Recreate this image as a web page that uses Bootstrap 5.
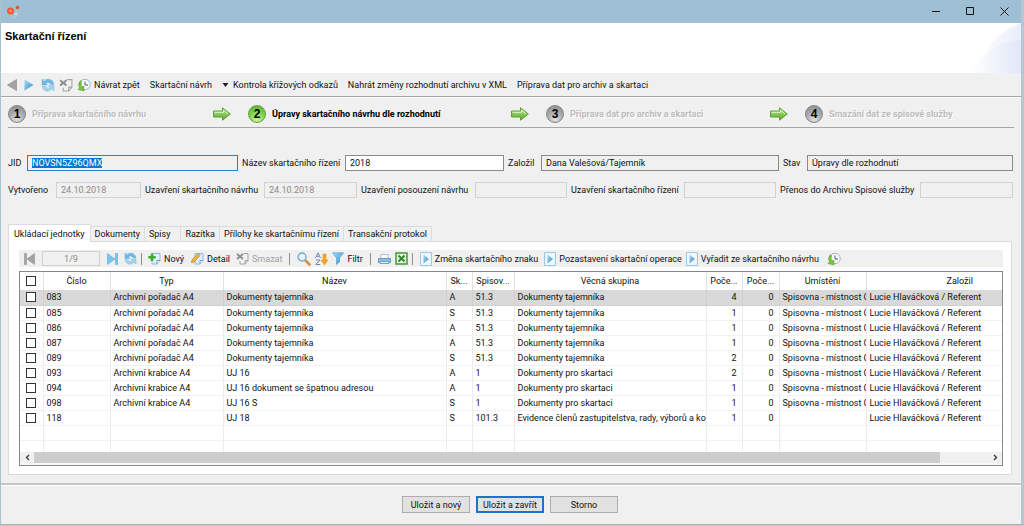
<!DOCTYPE html>
<html lang="cs">
<head>
<meta charset="utf-8">
<meta name="viewport" content="width=device-width, initial-scale=1">
<title>Skartační řízení</title>
<link href="https://cdn.jsdelivr.net/npm/bootstrap@5.3.0/dist/css/bootstrap.min.css" rel="stylesheet">
<style>
body{font-family:Roboto,"Liberation Sans",sans-serif;font-size:9px;line-height:14px;color:#111;background:#c9cdd0;}
button,input{font:inherit;color:inherit}
svg{display:block;flex:none}
.win{min-height:calc(100vh - 1px);background:#f0f0f0;border-left:1px solid #a9c3cd;border-right:3px solid #b4c8d3;border-bottom:1px solid #a8adb0}
.titlebar{height:23px;background:#9fc0d4;padding-left:5px}
.wbtn{width:34px;height:23px;border:0;background:none;padding:0;display:flex;align-items:center;justify-content:center}
.head{height:50px;background:#fff;position:relative;overflow:hidden}
.head h1{font:bold 11px/14px "Liberation Sans",sans-serif;color:#000;padding:6px 0 0 4px;margin:0}
.deco{position:absolute;right:0;top:0}
.tools{height:24px;border-bottom:1px solid #a6a6a6;box-shadow:0 1px #fff;padding-left:6px}
.tb{border:0;background:none;padding:0;display:flex;align-items:center;white-space:nowrap}
.tb:disabled{color:#a0a0a0}
.ic{margin-right:3px}
.g6{margin-right:6px}
.g7{margin-right:7px}
.g10{margin-right:10px}
.steps{display:grid;grid-template-columns:240fr 298fr 259fr 209fr;height:31px;margin:0 7px;border-bottom:1px solid #a6a6a6;padding:4px 0 0;list-style:none}
.steps li{display:flex;align-items:center;font-weight:bold;color:#bcbcbc;text-shadow:1px 1px #fff;white-space:nowrap}
.steps li.now{color:#000;text-shadow:none}
.num{width:18px;height:18px;border-radius:50%;background:radial-gradient(circle at 50% 85%,#e2e2e2,#a9a9a9 50%,#8b8b8b);border:1px solid #858585;color:#000;font:bold 12px/16px "Liberation Sans",sans-serif;text-align:center;margin-right:6px;text-shadow:none}
.now .num{background:radial-gradient(circle at 50% 85%,#d0f79a,#7ed04c 50%,#55ad30);border-color:#62a845}
.steps svg{margin-left:auto;margin-right:17px}
.f1,.f2{display:grid;align-items:center;margin:0 8px 0 7px;white-space:nowrap}
.f1{grid-template-columns:19px 211fr 107px 159fr 37px 238fr 28px 206fr;margin-top:27px}
.f2{grid-template-columns:48px 85fr 123px 93fr 118px 92fr 117px 92fr 144px 93fr;margin-top:11px}
.f1 label,.f2 label{padding-left:4px}
.f1 label:first-child,.f2 label:first-child{padding-left:0}
.fld{min-width:0;width:100%;height:16px;border:1px solid #8a8a8a;background:#f0f0f0;padding:0 4px;border-radius:0;outline:0;line-height:14px}
.fld:disabled{border-color:#d2d2d2;color:#8a8a8a}
.fld.white{background:#fff}
.fld.sel{border-color:#2d80c8;background:#f0f0f0}
.fld::selection{background:#0078d7;color:#fff}
.tabs{display:flex;align-items:flex-end;margin:26px 9px 0 7px;height:17px}
.tabs button{height:15px;border:1px solid #dcdcdc;border-left:0;border-bottom:0;background:#f0f0f0;padding:0 4px;text-align:left;white-space:nowrap;line-height:14px}
.tabs button.wide{padding-left:4px;padding-right:10px}
.tabs button.active{height:18px;background:#fff;border-left:1px solid #dcdcdc;padding:0 5px;margin-bottom:-1px;position:relative}
.pane{background:#fff;border:1px solid #dcdcdc;margin:0 9px 0 7px;padding:8px 8px 8px 10px}
.strip{height:17px;background:#f0f0f0;padding-left:5px;margin-bottom:4px}
.sep{width:1px;height:12px;background:#8f8f8f;flex:none}
.pos{width:58px;height:15px;border:1px solid #d0d0d0;background:#f0f0f0;text-align:center;color:#8a8a8a;padding:0;margin:0 7px}
.gridbox{border:1px solid #828790;overflow:hidden}
.gridbox table{table-layout:fixed;width:calc(100% + 52px);border-collapse:collapse}
.gridbox th,.gridbox td{height:15px;padding:0 0 0 3px;line-height:14px;border-right:1px solid #ececec;border-bottom:1px solid #f2f2f2;white-space:nowrap;overflow:hidden}
.gridbox th{height:18px;font-weight:normal;text-align:center;border-bottom:0;border-right-color:#e2e2e2;padding:0 2px}
.gridbox .n{text-align:right;padding-right:5px}
.gridbox tr.on td{background:#d9d9d9;border-color:#d0d0d0}
.gridbox td:first-child,.gridbox th:first-child{padding:0 0 0 6px;text-align:left}
.gridbox input{appearance:none;display:block;width:10px;height:10px;border:1px solid #333;background:#fff;margin:0}
.gridbox tr.last td{height:12px;border-bottom:0}
.hbar{height:13px;background:#f0f0f0;border-bottom:2px solid #f8f8f8}
.hbar button{border:0;background:none;padding:0;width:14px;height:11px;display:flex;align-items:center;justify-content:center}
.track{flex:1}
.thumb{height:11px;background:#cdcdcd}
.foot{margin-top:8px;border-top:2px solid #c6c6c6;box-shadow:inset 0 1px #fff;padding:11px 2px 10px 0}
.act{width:68px;height:17px;border:1px solid #adadad;background:#e1e1e1;padding:0;line-height:14px}
.act.main{border:2px solid #1a74cf;line-height:12px;margin:0 6px}
</style>
</head>
<body>
<svg width="0" height="0" class="position-absolute" aria-hidden="true">
<defs>
<linearGradient id="gb" x2="1" y2="1"><stop stop-color="#a8dcf5"/><stop offset="1" stop-color="#2f8fd0"/></linearGradient>
<linearGradient id="gg" x2="0" y2="1"><stop stop-color="#b9e88f"/><stop offset="1" stop-color="#58a82a"/></linearGradient>
<symbol id="sync" viewBox="0 0 14 14"><path d="M1 1.500h4.500M1 1.500v5.500h5.500L4.800 5.300Q7.500 3 10 6.500h3Q11.500.500 6.500 1.300Q4.500 1.700 3.200 3.300Z" fill="#6db9e4" stroke="#5ba9d6" stroke-width=".4"/><path d="M13 13v-5.500H7.500L9.200 9.200Q6.500 11.500 4 8H1Q2.500 14 7.500 13Q9.500 12.600 10.800 11Z" fill="#a3d4ef" stroke="#6db3dc" stroke-width=".4"/></symbol>
<symbol id="clock" viewBox="0 0 14 14"><circle cx="8" cy="6.500" r="5.200" fill="#f5fafc" stroke="#9eb4bc"/><path d="M8 3.500V7h3" fill="none" stroke="#557" /><path d="M3.500 2.500Q0 6 2.500 10L.8 11.500 7 13V8L5 9Q3.500 7 4.500 4Z" fill="#7cc142" stroke="#559c28" stroke-width=".5"/></symbol>
<symbol id="page" viewBox="0 0 13 13"><path d="M4 1.500h8v7l-3 3.500H4Z" fill="#e0f0fc" stroke="#8cb9de"/><path d="M12 8.500H9V12" fill="#fff" stroke="#5e9cd0"/></symbol>
<symbol id="pagex" viewBox="0 0 13 13"><path d="M7.500 1.500H12v7l-3 3.500H4V9" fill="#f2f2f2" stroke="#a4a4a4"/><path d="M12 8.500H9V12" fill="none" stroke="#a4a4a4"/><path d="M1 2l6 5M7 2L1 7" stroke="#8d8d8d" stroke-width="1.800"/></symbol>
<symbol id="play" viewBox="0 0 12 14"><path d="M.5.5h11v13H.5Z" fill="#f1f8fd" stroke="#9cc7e4"/><path d="M3.500 2.500L9 7l-5.500 4.500Z" fill="url(#gb)"/></symbol>
<symbol id="arrow" viewBox="0 0 18 14"><path d="M.5 4h9V.8L17.300 7 9.500 13.200V10h-9Z" fill="url(#gg)" stroke="#5ba234"/><path d="M1.500 5.300h9V3l4.500 4" fill="none" stroke="#dff5c8"/></symbol>
</defs>
</svg>

<main class="win">
<header class="titlebar d-flex align-items-center">
<svg width="14" height="14" viewBox="0 0 14 14"><path d="M5 12q6 1 6.500-3L11 5" fill="none" stroke="#b9c9d2" stroke-width="1.200"/><circle cx="4.500" cy="6" r="3.500" fill="#ee5a34"/><circle cx="4.500" cy="6" r="1.400" fill="#ff8d68"/><circle cx="11.500" cy="2.500" r="1.700" fill="#e0502f"/><circle cx="9.800" cy="9" r="1.200" fill="#d5dde2"/></svg>
<div class="ms-auto d-flex">
<button class="wbtn" aria-label="Minimalizovat"><svg width="9" height="9" viewBox="0 0 9 9"><path d="M0 4.500h8" stroke="#111"/></svg></button>
<button class="wbtn" aria-label="Maximalizovat"><svg width="9" height="9" viewBox="0 0 9 9"><path d="M.5.500h7v7h-7Z" fill="none" stroke="#111"/></svg></button>
<button class="wbtn" aria-label="Zavřít"><svg width="9" height="9" viewBox="0 0 9 9"><path d="M.5.5l8 8M8.500.500l-8 8" stroke="#111"/></svg></button>
</div>
</header>
<div class="head">
<h1>Skartační řízení</h1>
<svg class="deco" width="52" height="50" viewBox="0 0 52 50"><defs><linearGradient id="dc"><stop stop-color="#fff"/><stop offset="1" stop-color="#dfe6f7"/></linearGradient></defs><path d="M8 50Q18 12 52 0V50Z" fill="url(#dc)" opacity=".7"/><path d="M0 50Q24 16 52 17V50Z" fill="url(#dc)" opacity=".8"/></svg>
</div>
<nav class="tools d-flex align-items-center">
<button class="tb g7" aria-label="Předchozí"><svg width="10" height="12" viewBox="0 0 10 12"><path d="M9.500.500v11L.5 6Z" fill="#a4a4a4" stroke="#888" stroke-width=".6"/></svg></button>
<button class="tb g7" aria-label="Další"><svg width="10" height="12" viewBox="0 0 10 12"><path d="M.5.500v11L9.500 6Z" fill="url(#gb)"/></svg></button>
<button class="tb me-1" aria-label="Obnovit"><svg width="14" height="14"><use href="#sync"/></svg></button>
<button class="tb me-1" aria-label="Odstranit"><svg width="14" height="14"><use href="#pagex"/></svg></button>
<button class="tb g10"><svg class="ic" width="14" height="14"><use href="#clock"/></svg>Návrat zpět</button>
<button class="tb me-1"><span class="g10">Skartační návrh</span><svg width="7" height="4" viewBox="0 0 7 4"><path d="M.5 0h6l-3 4Z" fill="#222"/></svg></button>
<button class="tb g10">Kontrola křížových odkazů</button>
<button class="tb g10">Nahrát změny rozhodnutí archivu v XML</button>
<button class="tb">Příprava dat pro archiv a skartaci</button>
</nav>
<ol class="steps">
<li><span class="num">1</span>Příprava skartačního návrhu<svg width="18" height="14"><use href="#arrow"/></svg></li>
<li class="now"><span class="num">2</span>Úpravy skartačního návrhu dle rozhodnutí<svg width="18" height="14"><use href="#arrow"/></svg></li>
<li><span class="num">3</span>Příprava dat pro archiv a skartaci<svg width="18" height="14"><use href="#arrow"/></svg></li>
<li><span class="num">4</span>Smazání dat ze spisové služby</li>
</ol>
<form>
<div class="f1">
<label for="jid">JID</label><input id="jid" class="fld sel" value="NOVSN5Z96QMX" readonly>
<label for="naz">Název skartačního řízení</label><input id="naz" class="fld white" value="2018">
<label for="zal">Založil</label><input id="zal" class="fld" value="Dana Valešová/Tajemník" readonly>
<label for="sta">Stav</label><input id="sta" class="fld" value="Úpravy dle rozhodnutí" readonly>
</div>
<div class="f2">
<label for="d1">Vytvořeno</label><input id="d1" class="fld" value="24.10.2018" disabled>
<label for="d2">Uzavření skartačního návrhu</label><input id="d2" class="fld" value="24.10.2018" disabled>
<label for="d3">Uzavření posouzení návrhu</label><input id="d3" class="fld" disabled>
<label for="d4">Uzavření skartačního řízení</label><input id="d4" class="fld" disabled>
<label for="d5">Přenos do Archivu Spisové služby</label><input id="d5" class="fld" disabled>
</div>
</form>
<div class="tabs" role="tablist">
<button class="active" role="tab">Ukládací jednotky</button><button role="tab">Dokumenty</button><button role="tab" class="wide">Spisy</button><button role="tab">Razítka</button><button role="tab">Přílohy ke skartačnímu řízení</button><button role="tab">Transakční protokol</button>
</div>
<section class="pane">
<div class="strip d-flex align-items-center">
<button class="tb" aria-label="První"><svg width="11" height="12" viewBox="0 0 11 12"><path d="M.5.500h2v11h-2ZM10.500.500v11L3 6Z" fill="#a3a3a3" stroke="#8b8b8b" stroke-width=".5"/></svg></button>
<input class="pos" value="1/9" disabled aria-label="Pozice">
<button class="tb g6" aria-label="Poslední"><svg width="11" height="12" viewBox="0 0 11 12"><path d="M8.500.500h2v11h-2ZM.5.500v11L8 6Z" fill="#7fc4ea" stroke="#4f9fd0" stroke-width=".5"/></svg></button>
<button class="tb me-1" aria-label="Obnovit"><svg width="13" height="13"><use href="#sync"/></svg></button>
<span class="sep g6"></span>
<button class="tb g7"><svg class="ic" width="13" height="13" viewBox="0 0 13 13"><use href="#page"/><path d="M.3 4h2.400V1.500h2.600V4h2.400v2.500H5.300V9H2.700V6.500H.3Z" fill="#3fae2a"/></svg>Nový</button>
<button class="tb g6"><svg class="ic" width="13" height="13" viewBox="0 0 13 13"><use href="#page"/><path d="M1 8L7 1.500 9 3.500 3 10 .5 10.500Z" fill="#f6b73c" stroke="#b97a1c" stroke-width=".7"/></svg>Detail</button>
<button class="tb g7" disabled><svg class="ic" width="13" height="13"><use href="#pagex"/></svg>Smazat</button>
<span class="sep g7"></span>
<button class="tb me-1" aria-label="Hledat"><svg width="14" height="14" viewBox="0 0 14 14"><path d="M8 8l4.500 4.500" stroke="#dd8b3c" stroke-width="2.500" stroke-linecap="round"/><circle cx="5" cy="5" r="4" fill="#e1f3fd" stroke="#73a9cf" stroke-width="1.300"/></svg></button>
<button class="tb me-1" aria-label="Seřadit"><svg width="13" height="14" viewBox="0 0 13 14"><path d="M.5 6L3 .8 5.500 6M1.500 4.300h3M.8 8h4.200L.8 12.500h4.400" fill="none" stroke="#7684a8"/><path d="M8 2h3v6h2l-3.500 5L6 8h2Z" fill="#f9a524" stroke="#e08a12" stroke-width=".5"/></svg></button>
<button class="tb g7"><svg class="ic" width="12" height="13" viewBox="0 0 12 13"><path d="M.5.800h11L7.500 6v4l-3 2.500V6Z" fill="url(#gb)" stroke="#4d96c8" stroke-width=".6"/></svg>Filtr</button>
<span class="sep g7"></span>
<button class="tb me-1" aria-label="Tisk"><svg width="13" height="13" viewBox="0 0 13 13"><path d="M3 2.500h7V7H3Z" fill="#fff" stroke="#a5c3dc"/><path d="M.5 6.500h12v4H.5Z" fill="#8fbce2" stroke="#6b9cc8"/><path d="M2 9.500h9v2H2Z" fill="#e9f3fb" stroke="#6f9fc8"/></svg></button>
<button class="tb me-1" aria-label="Export do Excelu"><svg width="13" height="13" viewBox="0 0 13 13"><path d="M1 1h11v11H1Z" fill="#e8f6e3" stroke="#3f9a35" stroke-width="1.500"/><path d="M3.500 3.500l6 6M9.500 3.500l-6 6" stroke="#2e8b2e" stroke-width="2"/></svg></button>
<span class="sep g7"></span>
<button class="tb g6"><svg class="ic" width="12" height="14"><use href="#play"/></svg>Změna skartačního znaku</button>
<button class="tb me-1"><svg class="ic" width="12" height="14"><use href="#play"/></svg>Pozastavení skartační operace</button>
<button class="tb me-2"><svg class="ic" width="12" height="14"><use href="#play"/></svg>Vyřadit ze skartačního návrhu</button>
<button class="tb" aria-label="Historie"><svg width="14" height="14"><use href="#clock"/></svg></button>
</div>
<div class="gridbox">
<table>
<colgroup><col style="width:23px"><col style="width:67px"><col style="width:113px"><col style="width:223px"><col style="width:26px"><col style="width:42px"><col style="width:192px"><col style="width:36px"><col style="width:37px"><col style="width:87px"><col></colgroup>
<thead><tr><th><input type="checkbox" aria-label="Vybrat vše"></th><th>Číslo</th><th>Typ</th><th>Název</th><th>Sk...</th><th>Spisov...</th><th>Věcná skupina</th><th>Poče...</th><th>Poče...</th><th>Umístění</th><th>Založil</th></tr></thead>
<tbody id="rows"></tbody>
</table>
<div class="hbar d-flex">
<button type="button" aria-label="Posunout vlevo"><svg width="5" height="7" viewBox="0 0 5 7"><path d="M4 1L1.500 3.500 4 6" fill="none" stroke="#333" stroke-width="1.300"/></svg></button>
<div class="track"><div class="thumb" style="width:95%"></div></div>
<button type="button" aria-label="Posunout vpravo"><svg width="5" height="7" viewBox="0 0 5 7"><path d="M1 1l2.500 2.500L1 6" fill="none" stroke="#333" stroke-width="1.300"/></svg></button>
</div>
</div>
</section>
<footer class="foot d-flex justify-content-center">
<button class="act">Uložit a nový</button><button class="act main">Uložit a zavřít</button><button class="act">Storno</button>
</footer>
</main>
<script>
const P='Archivní pořadač A4',K='Archivní krabice A4',T='Dokumenty tajemníka',D='Dokumenty pro skartaci',U='Spisovna - místnost C';
const rows=[['083',P,T,'A','51.3',T,4,U],['085',P,T,'S','51.3',T,1,U],['086',P,T,'A','51.3',T,1,U],['087',P,T,'A','51.3',T,1,U],['089',P,T,'S','51.3',T,2,U],['093',K,'UJ 16','A','1',D,2,U],['094',K,'UJ 16 dokument se špatnou adresou','A','1',D,1,U],['098',K,'UJ 16 S','S','1',D,1,U],['118','','UJ 18','S','101.3','Evidence členů zastupitelstva, rady, výborů a ko',1,'']];
const td=(v,c='')=>`<td class="${c}">${v}</td>`;
document.getElementById('rows').innerHTML=rows.map((r,i)=>`<tr class="${i?'':'on'}">`+td(`<input type="checkbox" aria-label="Vybrat ${r[0]}">`)+r.slice(0,6).map(v=>td(v)).join('')+td(r[6],'n')+td(0,'n')+td(r[7])+td('Lucie Hlaváčková / Referent')+'</tr>').join('')+`<tr>${td('').repeat(11)}</tr><tr class="last">${td('').repeat(11)}</tr>`;
document.getElementById('jid').select();
</script>
<script src="https://cdn.jsdelivr.net/npm/bootstrap@5.3.0/dist/js/bootstrap.bundle.min.js"></script>
</body>
</html>
